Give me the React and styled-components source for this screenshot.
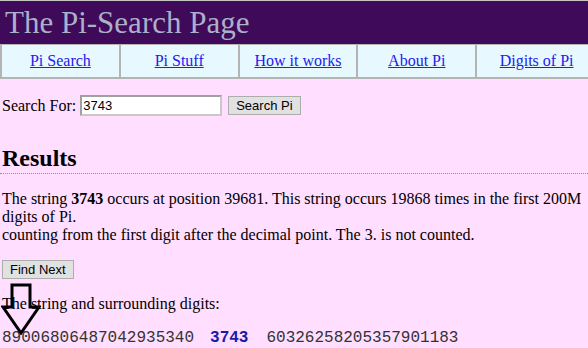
import React from 'react';
import styled, { createGlobalStyle } from 'styled-components';

const GlobalStyle = createGlobalStyle`
  html, body {
    margin: 0;
    padding: 0;
    background: #ffdeff;
  }
  body {
    font-family: "Liberation Serif", "Times New Roman", serif;
    font-size: 16px;
    color: #000;
  }
`;

const Page = styled.div`
  position: relative;
  width: 588px;
  overflow: hidden;
  border-top: 1px solid #c4c4c4;
`;

const Header = styled.header`
  background: #400a5a;
  height: 43px;
  padding-left: 5px;
  display: flex;
  align-items: center;
`;

const Title = styled.h1`
  margin: 0;
  font-size: 31px;
  font-weight: normal;
  color: #a9b2c8;
  line-height: 1;
`;

const Nav = styled.nav`
  display: grid;
  grid-template-columns: repeat(5, 1fr);
  width: 596px;
  background: #e8f8ff;
  border: 2px solid #b4b4b4;
  border-top: 1px solid #b4b4b4;
  border-right: 0;
  height: 35px;
  box-sizing: border-box;
`;

const NavCell = styled.div`
  display: flex;
  align-items: center;
  justify-content: center;
  border-right: 2px solid #b4b4b4;
  &:last-child {
    border-right: 0;
  }
`;

const NavLink = styled.a`
  color: #2020ee;
  text-decoration: underline;
  font-size: 16px;
`;

const Content = styled.main`
  padding: 0 2px;
`;

const SearchRow = styled.form`
  display: flex;
  align-items: center;
  margin-top: 16px;
`;

const Label = styled.label`
  margin-right: 4px;
`;

const Input = styled.input`
  width: 136px;
  height: 17px;
  padding: 0 1px;
  border: 2px solid;
  border-color: #a0a0a0 #c8c8c8 #c8c8c8 #a0a0a0;
  font-family: "Liberation Sans", Arial, sans-serif;
  font-size: 13px;
  background: #fff;
`;

const Button = styled.button`
  font-family: "Liberation Sans", Arial, sans-serif;
  font-size: 13px;
  background: #e1e1e1;
  border: 1px solid #adadad;
  padding: 1px 7px;
  height: 19px;
  margin-left: ${p => p.$gap || 0}px;
  color: #000;
`;

const Heading = styled.h2`
  margin: 29px -2px 0;
  font-size: 24px;
  font-weight: bold;
  padding: 0 2px 1px;
  border-bottom: 1px dotted #ff5c80;
`;

const Para = styled.p`
  margin: 16px 0 0;
  line-height: 18px;
`;

const Digits = styled.div`
  margin-top: 16px;
  font-family: "Liberation Mono", "Courier New", monospace;
  font-size: 16px;
  color: #333;
  white-space: pre;
`;

const Match = styled.b`
  color: #1a1aa8;
  margin: 0 18px 0 16px;
`;

const Arrow = styled.svg`
  position: absolute;
  left: 1px;
  top: 282px;
`;

export default function App() {
  const links = ['Pi Search', 'Pi Stuff', 'How it works', 'About Pi', 'Digits of Pi'];
  return (
    <>
      <GlobalStyle />
      <Page>
        <Header>
          <Title>The Pi-Search Page</Title>
        </Header>
        <Nav>
          {links.map(l => (
            <NavCell key={l}>
              <NavLink href="#">{l}</NavLink>
            </NavCell>
          ))}
        </Nav>
        <Content>
          <SearchRow onSubmit={e => e.preventDefault()}>
            <Label>Search For:</Label>
            <Input defaultValue="3743" />
            <Button $gap={6}>Search Pi</Button>
          </SearchRow>
          <Heading>Results</Heading>
          <Para>
            The string <b>3743</b> occurs at position 39681. This string occurs 19868 times in the first 200M digits of Pi.
            <br />
            counting from the first digit after the decimal point. The 3. is not counted.
          </Para>
          <Para>
            <Button type="button">Find Next</Button>
          </Para>
          <Para>The string and surrounding digits:</Para>
          <Digits>
            89006806487042935340<Match>3743</Match>60326258205357901183
          </Digits>
        </Content>
        <Arrow width="40" height="52" viewBox="0 0 40 52">
          <path
            d="M11 2 H29 V24 H38 L20 50 L2 24 H11 Z"
            fill="none"
            stroke="#000"
            strokeWidth="3"
            strokeLinejoin="miter"
          />
        </Arrow>
      </Page>
    </>
  );
}
